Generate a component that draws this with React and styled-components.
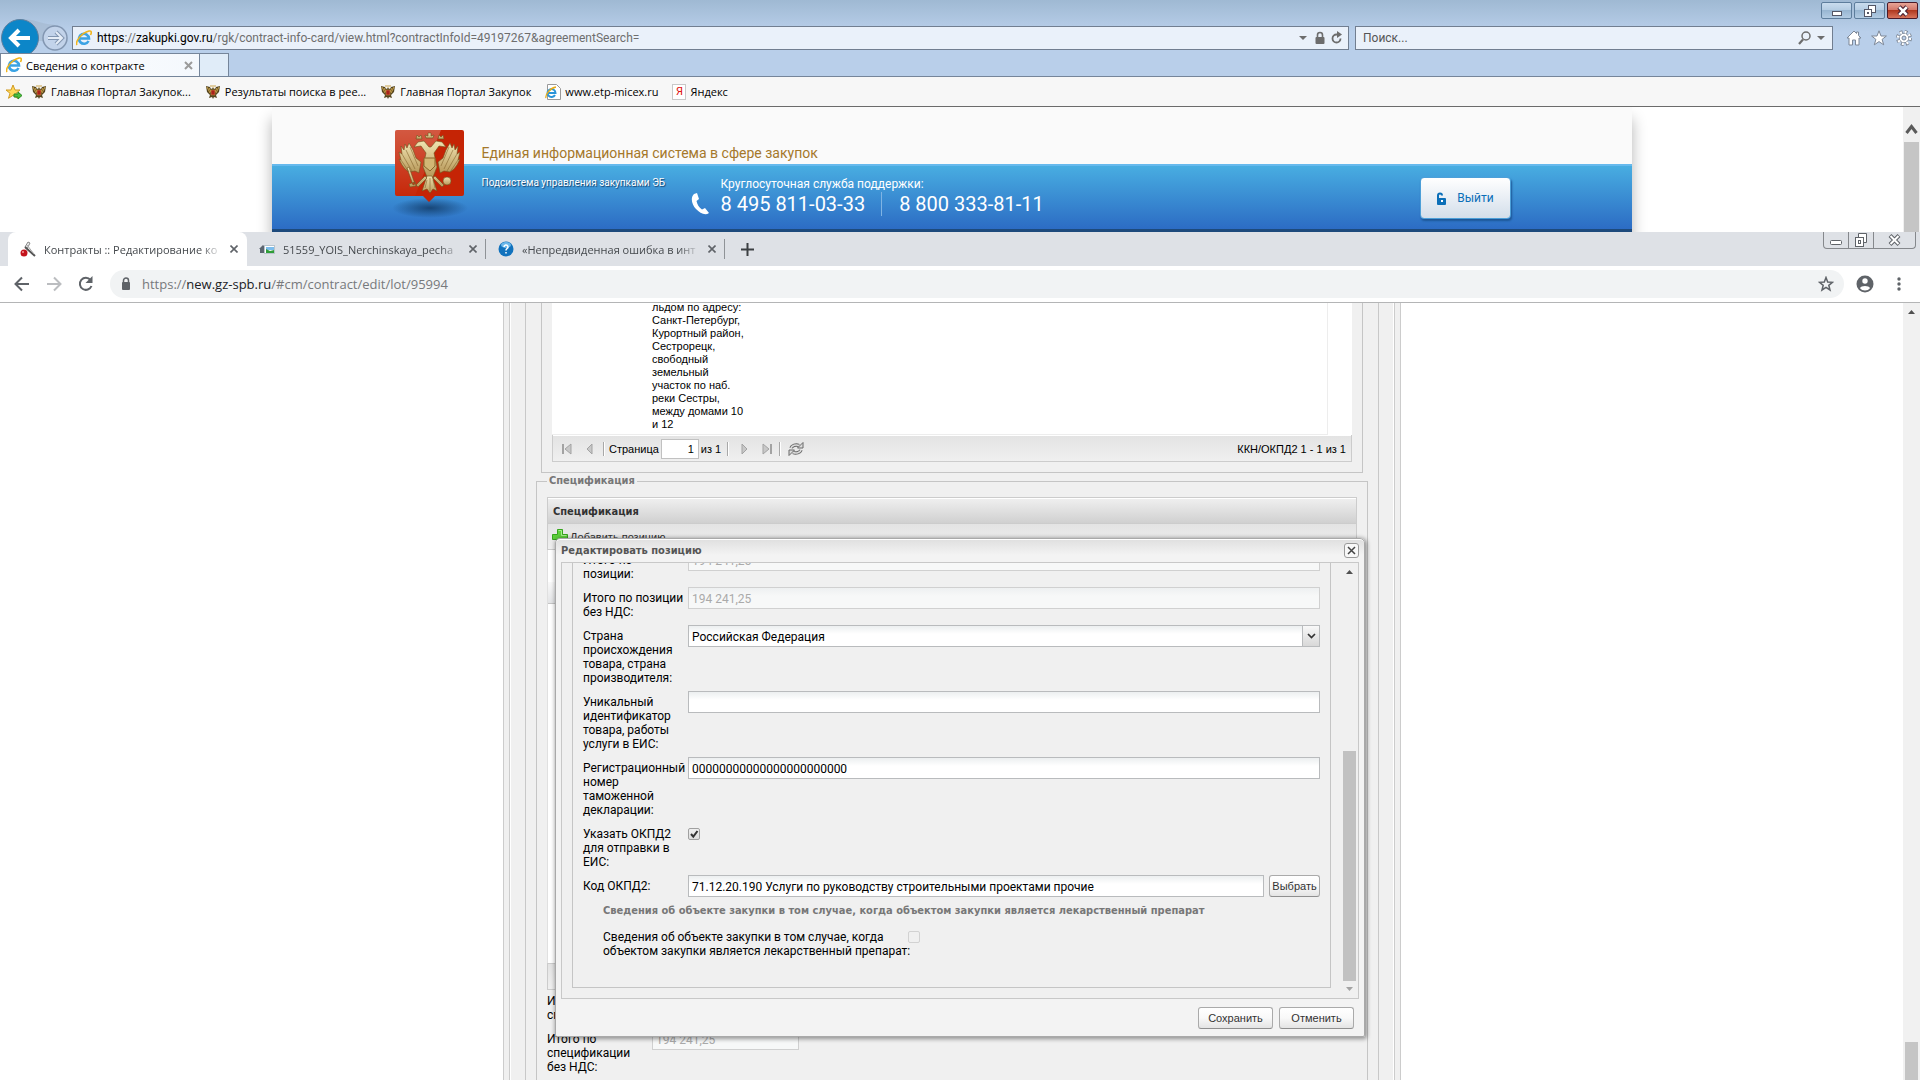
import React from 'react';
import styled, { createGlobalStyle } from 'styled-components';

const FAVORITES = [
  { icon: 'eagle', text: 'Главная Портал Закупок...' },
  { icon: 'eagle', text: 'Результаты поиска в рее...' },
  { icon: 'eagle', text: 'Главная Портал Закупок' },
  { icon: 'ie', text: 'www.etp-micex.ru' },
  { icon: 'yandex', text: 'Яндекс' },
];

const ADDRESS_LINES = [
  'льдом по адресу:',
  'Санкт-Петербург,',
  'Курортный район,',
  'Сестрорецк,',
  'свободный',
  'земельный',
  'участок по наб.',
  'реки Сестры,',
  'между домами 10',
  'и 12',
];

const lines = list => list.map((line, i) => (
  <React.Fragment key={line}>
    {i > 0 && <br />}
    {line}
  </React.Fragment>
));

function App() {
  return (
    <Desktop>
      <GlobalStyle />
      <ExplorerWindow />
      <ChromeWindow />
    </Desktop>
  );
}

export default App;

function ExplorerWindow() {
  return (
    <Explorer>
      <ExplorerTitle>
        <ExplorerControl aria-label="Свернуть">
          <svg width="12" height="12" viewBox="0 0 12 12">
            <rect x="1.5" y="6.5" width="9" height="4" fill="#fff" stroke="#535666" />
          </svg>
        </ExplorerControl>
        <ExplorerControl aria-label="Окно">
          <svg width="12" height="12" viewBox="0 0 12 12">
            <rect x="4.5" y=".5" width="7" height="7" fill="#fff" stroke="#535666" />
            <rect x=".5" y="4.5" width="7" height="7" fill="#fff" stroke="#535666" />
            <rect x="3" y="7" width="2" height="2" fill="#535666" />
          </svg>
        </ExplorerControl>
        <ExplorerControl $close aria-label="Закрыть">
          <svg width="12" height="12" viewBox="0 0 12 12">
            <path d="M2 2l8 8M10 2l-8 8" stroke="#4a2030" strokeWidth="4.6" />
            <path d="M2.2 2.2l7.6 7.6M9.8 2.2l-7.6 7.6" stroke="#fff" strokeWidth="2.6" />
          </svg>
        </ExplorerControl>
      </ExplorerTitle>
      <ExplorerNav>
        <NavArrows>
          <svg width="72" height="38" viewBox="0 0 72 38">
            <path d="M20 0C35 0 37 4 55 6l-6 16H30z" fill="#a5b9d0" opacity=".7" />
            <circle cx="20" cy="19" r="18.5" fill="#0c86c8" stroke="#5f7f9e" />
            <path d="M30 19H12M19 11l-8 8 8 8" fill="none" stroke="#fff" strokeWidth="4" />
            <circle cx="55" cy="19" r="12" fill="#c2d3ea" stroke="#8296b1" strokeWidth="1.5" />
            <path d="M48 19h13M56 13l6 6-6 6" fill="none" stroke="#8296b1" strokeWidth="4" />
            <path d="M48 19h13M56 13l6 6-6 6" fill="none" stroke="#e5edf7" strokeWidth="2" />
          </svg>
        </NavArrows>
        <ExplorerBox $grow>
          <IeIcon />
          <ExplorerUrl>
            <b>https</b>://<b>zakupki.gov.ru</b>/rgk/contract-info-card/view.html?contractInfoId=49197267&amp;agreementSearch=
          </ExplorerUrl>
          <Caret />
          <svg width="12" height="16" viewBox="0 0 12 16">
            <path d="M3.500 8V5a2.500 2.500 0 0 1 5 0V8" fill="none" stroke="#6d6d6d" strokeWidth="1.600" />
            <rect x="1.500" y="7" width="9" height="7" rx="1" fill="#6d6d6d" />
          </svg>
          <svg width="12" height="16" viewBox="0 0 12 16">
            <path d="M7 4.500H5.500A4 4 0 1 0 9.500 8.500" fill="none" stroke="#6d6d6d" strokeWidth="1.800" />
            <path d="M6 1v7l5-3.500z" fill="#6d6d6d" />
          </svg>
        </ExplorerBox>
        <ExplorerBox>
          <SearchInput placeholder="Поиск..." aria-label="Поиск" />
          <svg width="16" height="16" viewBox="0 0 16 16">
            <circle cx="10" cy="6" r="4" fill="none" stroke="#6d6d6d" strokeWidth="1.500" />
            <path d="M7 9.500L3 14" stroke="#6d6d6d" strokeWidth="2.200" />
          </svg>
          <Caret />
        </ExplorerBox>
        <NavTools>
          <svg width="16" height="16" viewBox="0 0 16 16">
            <path d="M8 1L1 8h2v7h3.500v-5h3v5H13V8h2l-2.500-2.500V2h-2v1.500z" fill="#fff" stroke="#7c8797" />
          </svg>
          <svg width="16" height="16" viewBox="0 0 16 16">
            <path d="M8 .8l2 5.200h5.400l-4.300 3.400 1.600 5.400L8 11.600l-4.700 3.200 1.600-5.400L.6 6H6z" fill="#fff" stroke="#7c8797" />
          </svg>
          <svg width="16" height="16" viewBox="0 0 16 16">
            <circle cx="8" cy="8" r="6" fill="none" stroke="#7c8797" strokeWidth="4" strokeDasharray="2.700 2" />
            <circle cx="8" cy="8" r="4.800" fill="#fff" stroke="#7c8797" />
            <circle cx="8" cy="8" r="6" fill="none" stroke="#fff" strokeWidth="2.400" strokeDasharray="1.900 2.800" />
            <circle cx="8" cy="8" r="2" fill="#bcd0ea" stroke="#7c8797" />
          </svg>
        </NavTools>
      </ExplorerNav>
      <ExplorerTabs>
        <ExplorerTab>
          <IeIcon />
          <span>Сведения о контракте</span>
          <svg width="9" height="9" viewBox="0 0 9 9">
            <path d="M1 1l7 7M8 1L1 8" stroke="#9b9b9b" strokeWidth="2" />
          </svg>
        </ExplorerTab>
        <ExplorerNewTab aria-label="Новая вкладка" />
      </ExplorerTabs>
      <Favorites>
        <svg width="18" height="16" viewBox="0 0 18 16">
          <path d="M8 1l2 5h5l-4 3.300 1.500 5L8 11.300l-4.500 3 1.500-5L1 6h5z" fill="#ffd95a" stroke="#d09a22" />
          <path d="M9 10h4V8l4 3.500-4 3.500v-2H9z" fill="#4cc03c" stroke="#2b8a22" />
        </svg>
        <FavoriteList>
          {FAVORITES.map((item, i) => (
            <Favorite key={i} href="#">
              {item.icon === 'eagle' && <EagleIcon />}
              {item.icon === 'ie' && <IePageIcon />}
              {item.icon === 'yandex' && <YandexIcon>Я</YandexIcon>}
              {item.text}
            </Favorite>
          ))}
        </FavoriteList>
      </Favorites>
      <ExplorerPage>
        <SiteColumn>
          <SiteHeader>
            <SiteTop />
            <SiteBand />
            <SiteContent>
              <Emblem />
              <SiteTitles>
                <SiteName>Единая информационная система в сфере закупок</SiteName>
                <SiteRow>
                  <Subsystem>Подсистема управления закупками ЭБ</Subsystem>
                  <Support>
                    <span>Круглосуточная служба поддержки:</span>
                    <Phones>
                      <svg width="18" height="22" viewBox="0 0 18 22">
                        <path d="M3 1C-1 5 1 12 5 16s9 7 13 4l-4-5-3 1.500C8 14.500 6 11 5.500 8L8 6 6 0z" fill="#fff" />
                      </svg>
                      <span>8 495 811-03-33</span>
                      <span>8 800 333-81-11</span>
                    </Phones>
                  </Support>
                </SiteRow>
              </SiteTitles>
              <LogoutButton>
                <svg width="11" height="13" viewBox="0 0 11 13">
                  <path d="M2 7V3.500a2 2 0 0 1 4 0" fill="none" stroke="#0b6fb8" strokeWidth="2" />
                  <rect x="1" y="6" width="9" height="7" rx="1" fill="#0b6fb8" />
                  <rect x="5" y="8" width="2" height="2" fill="#fff" />
                </svg>
                Выйти
              </LogoutButton>
            </SiteContent>
          </SiteHeader>
        </SiteColumn>
        <ExplorerScroll>
          <svg width="17" height="35" viewBox="0 0 17 35">
            <path d="M3.500 26l5-6.500 5 6.500" fill="none" stroke="#5a5a5a" strokeWidth="3" />
          </svg>
          <ScrollThumb />
        </ExplorerScroll>
      </ExplorerPage>
    </Explorer>
  );
}

function ChromeWindow() {
  return (
    <Chrome>
      <ChromeTabs>
        <ChromeTab $active>
          <svg width="16" height="16" viewBox="0 0 16 16">
            <path d="M5 6l3-5 2 1-3 6z" fill="#eee" stroke="#888" />
            <path d="M5 6l10 9" stroke="#555" strokeWidth="2" />
            <path d="M7 4l7 9" stroke="#aaa" />
            <circle cx="4" cy="12" r="3.500" fill="#c3141c" />
            <circle cx="3" cy="11" r="1" fill="#f39a9a" />
          </svg>
          <TabText>Контракты :: Редактирование ко</TabText>
          <TabClose />
        </ChromeTab>
        <ChromeTab $divider>
          <svg width="16" height="16" viewBox="0 0 16 16">
            <path d="M0 8l4-4 4 4H7v4H1V8z" fill="#5c6670" />
            <rect x="5.500" y="4.500" width="10" height="8" fill="#fff" stroke="#b9c4cc" />
            <rect x="7" y="6" width="8" height="3" fill="#7dbdec" />
            <path d="M7 12V8l4 2 4-1v3z" fill="#2f9d38" />
          </svg>
          <TabText>51559_YOIS_Nerchinskaya_pecha</TabText>
          <TabClose />
        </ChromeTab>
        <ChromeTab $divider>
          <svg width="16" height="16" viewBox="0 0 16 16">
            <circle cx="8" cy="8" r="7.500" fill="#1172bd" />
            <ellipse cx="8" cy="4" rx="5" ry="3" fill="#6cb8ea" />
            <path d="M6 6a2 2 0 1 1 3 1.700Q8 8.300 8 9.500M8 11v1.500" fill="none" stroke="#fff" strokeWidth="1.500" />
          </svg>
          <TabText>«Непредвиденная ошибка в инт</TabText>
          <TabClose />
        </ChromeTab>
        <NewTab aria-label="Новая вкладка">
          <svg width="13" height="13" viewBox="0 0 13 13">
            <path d="M6.500 0v13M0 6.500h13" stroke="#3c4043" strokeWidth="2" />
          </svg>
        </NewTab>
        <ChromeControls>
          <ChromeControl aria-label="Свернуть">
            <svg width="14" height="14" viewBox="0 0 14 14">
              <rect x="1.500" y="7.500" width="11" height="4" rx="1" fill="#fff" stroke="#5f6368" />
            </svg>
          </ChromeControl>
          <ChromeControl aria-label="Окно">
            <svg width="14" height="14" viewBox="0 0 14 14">
              <path d="M4.500 4V.5h8v9H9" fill="#fff" stroke="#5f6368" />
              <rect x="1.500" y="4.500" width="8" height="9" fill="#fff" stroke="#5f6368" />
              <rect x="4.500" y="7.500" width="2" height="3" fill="#fff" stroke="#5f6368" />
            </svg>
          </ChromeControl>
          <ChromeControl $wide aria-label="Закрыть">
            <svg width="13" height="12" viewBox="0 0 13 12">
              <path d="M2 1.500l9 9M11 1.500l-9 9" stroke="#5f6368" strokeWidth="4" />
              <path d="M2.500 2l8 8M10.500 2l-8 8" stroke="#fff" strokeWidth="2" />
            </svg>
          </ChromeControl>
        </ChromeControls>
      </ChromeTabs>
      <ChromeToolbar>
        <svg width="16" height="16" viewBox="0 0 16 16">
          <path d="M15 8H2M8 1.500L1.500 8 8 14.500" fill="none" stroke="#5f6368" strokeWidth="2" />
        </svg>
        <svg width="16" height="16" viewBox="0 0 16 16">
          <path d="M1 8h13M8 1.500L14.500 8 8 14.500" fill="none" stroke="#bbbdc0" strokeWidth="2" />
        </svg>
        <svg width="16" height="16" viewBox="0 0 16 16">
          <path d="M13.500 10A6 6 0 1 1 12.500 4" fill="none" stroke="#5f6368" strokeWidth="2" />
          <path d="M14.500 0v7h-7z" fill="#5f6368" />
        </svg>
        <Omnibox>
          <svg width="10" height="14" viewBox="0 0 10 14">
            <path d="M2.500 6V3.500a2.500 2.500 0 0 1 5 0V6" fill="none" stroke="#5f6368" strokeWidth="1.500" />
            <rect x="1" y="5" width="8" height="8" rx="1" fill="#5f6368" />
          </svg>
          <OmniboxUrl>
            https://<b>new.gz-spb.ru</b>/#cm/contract/edit/lot/95994
          </OmniboxUrl>
          <svg width="16" height="16" viewBox="0 0 16 16">
            <path d="M8 1.500l1.700 4.500 4.800.3-3.700 3 1.200 4.700L8 11.400 4 14l1.200-4.700-3.700-3 4.800-.3z" fill="none" stroke="#5f6368" strokeWidth="1.500" />
          </svg>
        </Omnibox>
        <svg width="18" height="18" viewBox="0 0 18 18">
          <circle cx="9" cy="9" r="8.500" fill="#5f6368" />
          <circle cx="9" cy="6" r="2.700" fill="#fff" />
          <path d="M3.800 13a5.500 3 0 0 1 10.400 0 6.500 6.500 0 0 1-10.400 0z" fill="#fff" />
        </svg>
        <svg width="18" height="18" viewBox="0 0 18 18">
          <circle cx="9" cy="4" r="1.700" fill="#5f6368" />
          <circle cx="9" cy="9" r="1.700" fill="#5f6368" />
          <circle cx="9" cy="14" r="1.700" fill="#5f6368" />
        </svg>
      </ChromeToolbar>
      <ChromePage>
        <PageArea>
          <ContractPage />
        </PageArea>
        <PageScroll>
          <svg width="17" height="17" viewBox="0 0 17 17">
            <path d="M5 11h7L8.500 7z" fill="#505050" />
          </svg>
          <ScrollThumb $bottom />
        </PageScroll>
        <Overlay>
          <EditDialog />
        </Overlay>
      </ChromePage>
    </Chrome>
  );
}

function ContractPage() {
  return (
    <OuterFrame>
      <MiddleFrame>
        <InnerFrame>
          <CodesBox>
            <GridView>
              <GridTable>
                <tbody>
                  <tr>
                    <GridCell $width="98px" />
                    <GridCell $width="110px">{lines(ADDRESS_LINES)}</GridCell>
                    <GridCell />
                  </tr>
                </tbody>
              </GridTable>
            </GridView>
            <Paging />
          </CodesBox>
          <SpecBox>
            <Legend>Спецификация</Legend>
            <PanelHeader>Спецификация</PanelHeader>
            <PanelToolbar>
              <AddButton>
                <svg width="16" height="16" viewBox="0 0 16 16">
                  <path d="M5.500.5h5v5h5v5h-5v5h-5v-5h-5v-5h5z" fill="#5ed03c" stroke="#37a51d" />
                  <path d="M6.500 1.500h3v5h5" fill="none" stroke="#a8ee90" />
                </svg>
                Добавить позицию
              </AddButton>
            </PanelToolbar>
            <SpecGrid>
              <SpecGridHeader />
            </SpecGrid>
            <PanelFooter />
            <Row>
              <Label as="span" $width="105px">{lines(['Итого по', 'спецификации:'])}</Label>
            </Row>
            <Row>
              <Label htmlFor="spec-total" $width="105px">{lines(['Итого по', 'спецификации', 'без НДС:'])}</Label>
              <TextField id="spec-total" $width="147px" disabled defaultValue="194 241,25" />
            </Row>
          </SpecBox>
        </InnerFrame>
      </MiddleFrame>
    </OuterFrame>
  );
}

function Paging() {
  return (
    <PagingBar>
      <PageButton disabled aria-label="Первая страница">
        <PageArrow d="M11 3v10L5 8z" bar="M3 3v10" />
      </PageButton>
      <PageButton disabled aria-label="Предыдущая страница">
        <PageArrow d="M10 3v10L5 8z" />
      </PageButton>
      <PagingSeparator />
      <PagingText htmlFor="page">Страница</PagingText>
      <PageInput id="page" defaultValue="1" />
      <span>из 1</span>
      <PagingSeparator />
      <PageButton disabled aria-label="Следующая страница">
        <PageArrow d="M6 3v10l5-5z" />
      </PageButton>
      <PageButton disabled aria-label="Последняя страница">
        <PageArrow d="M5 3v10l6-5z" bar="M13 3v10" />
      </PageButton>
      <PagingSeparator />
      <PageButton aria-label="Обновить">
        <svg width="16" height="16" viewBox="0 0 16 16">
          <path d="M3 7a5.500 4 0 0 1 8-2.500M13 9a5.500 4 0 0 1-8 2.500" fill="none" stroke="#686868" strokeWidth="3.500" />
          <path d="M3 7a5.500 4 0 0 1 8-2.500M13 9a5.500 4 0 0 1-8 2.500" fill="none" stroke="#ddd" strokeWidth="1.500" />
          <path d="M9.500 7H15V1.500zM6.500 9H1v5.500z" fill="#ddd" stroke="#686868" />
        </svg>
      </PageButton>
      <PagingInfo>ККН/ОКПД2 1 - 1 из 1</PagingInfo>
    </PagingBar>
  );
}

function PageArrow({ d, bar }) {
  return (
    <svg width="16" height="16" viewBox="0 0 16 16">
      <path d={d} fill="#c8c8c8" stroke="#a3a3a3" />
      {bar && <path d={bar} stroke="#a3a3a3" strokeWidth="2" />}
    </svg>
  );
}

function EditDialog() {
  return (
    <Dialog role="dialog" aria-labelledby="dialog-title">
      <DialogHeader>
        <DialogTitle id="dialog-title">Редактировать позицию</DialogTitle>
        <DialogClose aria-label="Закрыть">
          <svg width="15" height="15" viewBox="0 0 15 15">
            <rect x=".5" y=".5" width="14" height="14" rx="2.500" fill="#f8f8f8" stroke="#9a9a9a" />
            <path d="M4 4l7 7M11 4l-7 7" stroke="#444" strokeWidth="1.500" />
          </svg>
        </DialogClose>
      </DialogHeader>
      <DialogBody>
        <DialogScroller>
          <FormBox>
            <Row>
              <Label htmlFor="total">{lines(['Итого по', 'позиции:'])}</Label>
              <TextField id="total" disabled defaultValue="194 241,25" />
            </Row>
            <Row>
              <Label htmlFor="total-no-vat">{lines(['Итого по позиции', 'без НДС:'])}</Label>
              <TextField id="total-no-vat" disabled defaultValue="194 241,25" />
            </Row>
            <Row>
              <Label htmlFor="country">
                {lines(['Страна', 'происхождения', 'товара, страна', 'производителя:'])}
              </Label>
              <SelectWrap>
                <Select id="country">
                  <option>Российская Федерация</option>
                </Select>
                <SelectTrigger>
                  <svg width="9" height="6" viewBox="0 0 9 6">
                    <path d="M1 1l3.500 3.500L8 1" fill="none" stroke="#333" strokeWidth="1.700" />
                  </svg>
                </SelectTrigger>
              </SelectWrap>
            </Row>
            <Row>
              <Label htmlFor="uid">
                {lines(['Уникальный', 'идентификатор', 'товара, работы', 'услуги в ЕИС:'])}
              </Label>
              <TextField id="uid" />
            </Row>
            <Row>
              <Label htmlFor="reg-number">
                {lines(['Регистрационный', 'номер', 'таможенной', 'декларации:'])}
              </Label>
              <TextField id="reg-number" defaultValue="00000000000000000000000" />
            </Row>
            <Row>
              <Label htmlFor="okpd-on">{lines(['Указать ОКПД2', 'для отправки в', 'ЕИС:'])}</Label>
              <Checkbox id="okpd-on" defaultChecked />
            </Row>
            <Row>
              <Label htmlFor="okpd">Код ОКПД2:</Label>
              <TextField id="okpd" defaultValue="71.12.20.190 Услуги по руководству строительными проектами прочие" />
              <ExtButton $small>Выбрать</ExtButton>
            </Row>
            <DrugBox>
              <DrugLegend>
                Сведения об объекте закупки в том случае, когда объектом закупки является лекарственный препарат
              </DrugLegend>
              <Row>
                <Label htmlFor="drug" $width="305px">
                  {lines(['Сведения об объекте закупки в том случае, когда', 'объектом закупки является лекарственный препарат:'])}
                </Label>
                <Checkbox id="drug" disabled />
              </Row>
            </DrugBox>
          </FormBox>
        </DialogScroller>
        <DialogScroll>
          <svg width="13" height="17" viewBox="0 0 13 17">
            <path d="M3 11h7L6.500 7z" fill="#505050" />
          </svg>
          <DialogThumb />
          <svg width="13" height="17" viewBox="0 0 13 17">
            <path d="M3 6h7l-3.500 4z" fill="#a3a3a3" />
          </svg>
        </DialogScroll>
      </DialogBody>
      <DialogFooter>
        <ExtButton>Сохранить</ExtButton>
        <ExtButton>Отменить</ExtButton>
      </DialogFooter>
    </Dialog>
  );
}

function Checkbox(props) {
  return (
    <CheckWrap>
      <CheckInput type="checkbox" {...props} />
      {props.defaultChecked && (
        <CheckMark width="12" height="12" viewBox="0 0 12 12">
          <path d="M3 6l2.300 2.700L9.500 3" fill="none" stroke="#333" strokeWidth="2" />
        </CheckMark>
      )}
    </CheckWrap>
  );
}

function IeIcon() {
  return (
    <svg width="16" height="16" viewBox="0 0 16 16">
      <path d="M3.500 8.500H13A5 5 0 1 0 12.500 11" fill="none" stroke="#3ba3e4" strokeWidth="2.600" />
      <path d="M1 15C-1 12 5 3 13 1c3-.5 2.500 2 1.500 4" fill="none" stroke="#f0b41c" strokeWidth="1.600" />
    </svg>
  );
}

function IePageIcon() {
  return (
    <svg width="16" height="16" viewBox="0 0 16 16">
      <path d="M2.500.5h9l4 4v11h-13z" fill="#fff" stroke="#999" />
      <path d="M3 9h7.500a4 4 0 1 0-.5 2" fill="none" stroke="#2a94d8" strokeWidth="2" />
      <path d="M1 14C0 11 5 4 11 3" fill="none" stroke="#e9ac17" strokeWidth="1.300" />
    </svg>
  );
}

function EagleIcon() {
  return (
    <svg width="16" height="16" viewBox="0 0 16 16">
      <path d="M8 4L6 5 5 3 1 2l1 6 3 3-1 3 3-1 1 2 1-2 3 1-1-3 3-3 1-6-4 1-1 2z" fill="#55451f" />
      <path d="M2 3l3 6M4 4l2 4M14 3l-3 6M12 4l-2 4M8 1v3M5 2h2M9 2h2" stroke="#c9a24a" />
      <rect x="6" y="6" width="4" height="5" fill="#a8221c" stroke="#d8a04a" strokeWidth=".5" />
    </svg>
  );
}

function Emblem() {
  const wing = 'M31 32l-5-4-3-8-4-7-2 5-2-4-1 6-3-4 1 8-3-2 2 8-2-1 3 6 3 4 4 3 6-1 4 2z';
  return (
    <EmblemSvg width="80" height="90" viewBox="0 0 80 90">
      <defs>
        <radialGradient id="shade">
          <stop offset="0" stopColor="#14406f" stopOpacity=".9" />
          <stop offset="1" stopColor="#14406f" stopOpacity="0" />
        </radialGradient>
        <linearGradient id="gold" x1="0" y1="0" x2="0" y2="1">
          <stop offset="0" stopColor="#efe2b0" />
          <stop offset="1" stopColor="#b8995a" />
        </linearGradient>
        <linearGradient id="shine" x1="0" y1="0" x2="0" y2="1">
          <stop offset="0" stopColor="#fff" stopOpacity=".6" />
          <stop offset="1" stopColor="#fff" stopOpacity=".05" />
        </linearGradient>
      </defs>
      <ellipse cx="40" cy="78" rx="38" ry="10" fill="url(#shade)" />
      <path d="M7 0h65q2 0 2 2v62q0 2-2 2H45l-6 6-6-6H7q-2 0-2-2V2q0-2 2-2z" fill="#c52405" />
      <path d="M7 0h44L25 66H7q-2 0-2-2V2q0-2 2-2z" fill="url(#shine)" opacity=".4" />
      <g fill="url(#gold)" stroke="#71501d" strokeWidth=".6">
        <path d={wing} />
        <path d={wing} transform="translate(79 0) scale(-1 1)" />
        <path d="M36 23l-5-7-7 1 4-5 6-1 5 6h2l5-6 6 1 4 5-7-1-5 7 3 14-4 10h-6l-4-10z" />
        <path d="M37 46h5l5 15-4-2-3 4-3-4-5 2z" />
        <path d="M36 8l-1-3 3 1V3h3v3l3-1-1 3zM26 9l1-4 2 2 2-2 1 4zM48 9l1-4 2 2 2-2 1 4z" />
        <circle cx="57" cy="51" r="4" />
        <path d="M17 38l6 17 2-1-6-17zM26 55l9-9 2 2-9 9zM54 55l-9-9-2 2 9 9zM19 54l6-2 1 4-6 1z" />
      </g>
      <path d="M34 28h11v8l-5 5-6-5z" fill="#d2b775" stroke="#8a672a" />
      <g stroke="#80602a" strokeWidth=".8" opacity=".7">
        <path d="M16 20l9 19M20 17l8 19M12 24l10 17M11 30l8 12M63 20l-9 19M59 17l-8 19M67 24L57 41M68 30l-8 12M40 48v13M37 50l-2 8M43 50l2 8" />
      </g>
    </EmblemSvg>
  );
}

function TabClose() {
  return (
    <TabCloseButton aria-label="Закрыть вкладку">
      <svg width="8" height="8" viewBox="0 0 8 8">
        <path d="M.5.5l7 7M7.500.5l-7 7" stroke="#5f6368" strokeWidth="1.600" />
      </svg>
    </TabCloseButton>
  );
}

const GlobalStyle = createGlobalStyle`
  * {
    box-sizing: border-box;
  }

  body {
    margin: 0;
    font-family: 'Roboto', 'Noto Sans', sans-serif;
    font-size: 12px;
    color: #000;
    overflow: hidden;
  }

  button {
    margin: 0;
    padding: 0;
    border: none;
    background: none;
    font: inherit;
    color: inherit;
  }

  svg {
    display: block;
    flex: none;
  }
`;

const Desktop = styled.div`
  display: flex;
  flex-direction: column;
  height: 100vh;
`;

const Explorer = styled.div`
  flex: none;
  height: 232px;
  display: flex;
  flex-direction: column;
  background: linear-gradient(#9fb9d3, #b9cfea 32px);
`;

const ExplorerTitle = styled.div`
  display: flex;
  justify-content: flex-end;
  gap: 2px;
  height: 18px;
  padding: 2px 2px 0 0;
`;

const ExplorerControl = styled.button`
  display: flex;
  align-items: center;
  justify-content: center;
  width: 31px;
  height: 17px;
  border: 1px solid ${props => (props.$close ? '#4b1a28' : '#5d7d9c')};
  border-radius: 2px;
  background: ${props => (props.$close
    ? 'linear-gradient(#e8a496, #d4786a 45%, #b03920 50%, #d8745c)'
    : 'linear-gradient(#c9dcee, #b5cde3 45%, #98b6d2 50%, #b2cbe3)')};
`;

const ExplorerNav = styled.div`
  display: flex;
  align-items: center;
  height: 35px;
  gap: 6px;
  padding-top: 5px;
`;

const NavArrows = styled.div`
  width: 66px;
`;

const ExplorerBox = styled.div`
  display: flex;
  align-items: center;
  gap: 5px;
  height: 24px;
  padding: 0 5px 0 3px;
  border: 1px solid #717e90;
  background: #eaf1fa;
  ${props => (props.$grow ? 'flex: 1; min-width: 0;' : 'flex: 0 1 478px;')}
`;

const ExplorerUrl = styled.span`
  flex: 1;
  color: #6e6e6e;
  white-space: nowrap;

  b {
    font-weight: 400;
    color: #000;
  }
`;

const Caret = styled.span`
  margin-right: 2px;
  border: 4px solid transparent;
  border-top-color: #6d6d6d;
  border-bottom-width: 0;
`;

const SearchInput = styled.input`
  flex: 1;
  min-width: 0;
  padding: 0 4px;
  border: none;
  background: none;
  font: 12px 'Roboto', sans-serif;

  &::placeholder {
    color: #555;
    opacity: 1;
  }
`;

const NavTools = styled.div`
  display: flex;
  gap: 9px;
  padding: 0 8px 0 7px;
`;

const ExplorerTabs = styled.div`
  display: flex;
  height: 24px;
  border-bottom: 1px solid #75859a;
  font-family: 'Open Sans', sans-serif;
  font-size: 11px;
`;

const ExplorerTab = styled.div`
  display: flex;
  align-items: center;
  gap: 4px;
  width: 200px;
  padding: 0 6px 0 5px;
  border: 1px solid #75859a;
  border-bottom: none;
  background: linear-gradient(90deg, #fff, #f4f8fd);

  span {
    flex: 1;
  }
`;

const ExplorerNewTab = styled.button`
  width: 29px;
  border: 1px solid #75859a;
  border-width: 1px 1px 0 0;
  background: #e0ecf8;
`;

const Favorites = styled.div`
  display: flex;
  align-items: center;
  gap: 8px;
  height: 30px;
  padding-left: 5px;
  border-bottom: 1px solid #6b6b6b;
  background: #f7f7f7;
  font-family: 'Open Sans', sans-serif;
  font-size: 11px;
`;

const FavoriteList = styled.div`
  display: flex;
  gap: 14px;
`;

const Favorite = styled.a`
  display: flex;
  align-items: center;
  gap: 4px;
  color: #000;
  text-decoration: none;
`;

const YandexIcon = styled.span`
  width: 14px;
  border: 1px solid #c8c8c8;
  background: #fff;
  color: #e01010;
  font: 11px/14px 'Roboto', sans-serif;
  text-align: center;
`;

const ExplorerPage = styled.div`
  flex: 1;
  display: flex;
  background: #fff;
  overflow: hidden;
`;

const SiteColumn = styled.div`
  flex: 1;
  display: flex;
  justify-content: center;
`;

const SiteHeader = styled.div`
  display: grid;
  grid-template-rows: 57px 1fr;
  width: 100%;
  max-width: 1360px;
  box-shadow: 0 12px 14px rgba(0, 0, 0, 0.3);
`;

const SiteTop = styled.div`
  grid-area: 1 / 1;
  background: #fafafa;
`;

const SiteBand = styled.div`
  grid-area: 2 / 1;
  border-top: 2px solid #66b9ed;
  border-bottom: 3px solid #1d4a7c;
  background: linear-gradient(#48ade1, #2c6cc4);
`;

const SiteContent = styled.div`
  grid-area: 1 / 1 / 3 / 2;
  display: flex;
  padding: 23px 121px 0 118px;
`;

const EmblemSvg = styled.svg`
  margin-right: 12px;
`;

const SiteTitles = styled.div`
  flex: 1;
  padding-top: 13px;
`;

const SiteName = styled.div`
  color: #a5782b;
  font-size: 14px;
  line-height: 20px;
`;

const SiteRow = styled.div`
  display: flex;
  padding-top: 13px;
  color: #fff;
`;

const Subsystem = styled.div`
  width: 209px;
  font-size: 10px;
  line-height: 14px;
  text-shadow: 1px 1px 1px #16436f;
`;

const Support = styled.div`
  line-height: 16px;

  > span {
    margin-left: 30px;
  }
`;

const Phones = styled.div`
  display: flex;
  align-items: center;
  gap: 12px;
  font-size: 20px;
  line-height: 24px;

  span + span {
    padding-left: 17px;
    margin-left: 4px;
    border-left: 1px solid #7fb4e4;
  }
`;

const LogoutButton = styled.button`
  display: flex;
  align-items: center;
  justify-content: center;
  gap: 10px;
  width: 91px;
  height: 42px;
  margin-top: 47px;
  border: 1px solid #4c9fd8;
  border-radius: 4px;
  background: linear-gradient(#fff, #d3deea);
  box-shadow: 1px 2px 2px #1d5797;
  color: #0b6fb8;
`;

const ExplorerScroll = styled.div`
  display: flex;
  flex-direction: column;
  width: 17px;
  background: #f0f0f0;
`;

const ScrollThumb = styled.div`
  flex: ${props => (props.$bottom ? 'none' : 1)};
  height: 38px;
  margin: ${props => (props.$bottom ? 'auto 2px 0' : '0 1px')};
  background: #c5c5c5;
`;

const Chrome = styled.div`
  flex: 1;
  min-height: 0;
  display: flex;
  flex-direction: column;
  background: #fff;
`;

const ChromeTabs = styled.div`
  display: flex;
  height: 34px;
  padding: 0 4px 0 8px;
  background: #dee1e6;
  font-family: 'Open Sans', sans-serif;
  font-size: 11px;
  color: #45494d;
`;

const ChromeTab = styled.div`
  display: flex;
  align-items: center;
  gap: 8px;
  width: 239px;
  padding: 0 12px;
  border-radius: 8px 8px 0 0;
  background: ${props => (props.$active ? '#fff' : 'none')};

  &::after {
    content: '';
    width: 1px;
    height: 20px;
    margin-right: -12px;
    background: ${props => (props.$divider ? '#8f9397' : 'none')};
  }
`;

const TabText = styled.span`
  flex: 1;
  overflow: hidden;
  white-space: nowrap;
  mask-image: linear-gradient(90deg, #000 88%, transparent);
`;

const TabCloseButton = styled.button`
  display: flex;
  padding: 4px;
  margin: 0 -4px;
`;

const NewTab = styled.button`
  width: 30px;
  padding-left: 16px;
  align-self: center;
`;

const ChromeControls = styled.div`
  display: flex;
  height: 17px;
  margin-left: auto;
  border: 1px solid #85888c;
  border-top: none;
  border-radius: 0 0 4px 4px;
`;

const ChromeControl = styled.button`
  display: flex;
  align-items: center;
  justify-content: center;
  width: ${props => (props.$wide ? '41px' : '25px')};
  border-right: ${props => (props.$wide ? 'none' : '1px solid #85888c')};
`;

const ChromeToolbar = styled.div`
  display: flex;
  align-items: center;
  gap: 16px;
  height: 37px;
  padding: 0 12px 0 14px;
  border-bottom: 1px solid #b4b5b6;
`;

const Omnibox = styled.div`
  flex: 1;
  display: flex;
  align-items: center;
  gap: 11px;
  height: 28px;
  margin: 0 -4px 0 0;
  padding: 0 10px 0 11px;
  border-radius: 14px;
  background: #f1f3f4;
`;

const OmniboxUrl = styled.span`
  flex: 1;
  color: #77797c;
  font-family: 'Open Sans', sans-serif;
  font-size: 13px;

  b {
    font-weight: 400;
    color: #202124;
  }
`;

const ChromePage = styled.div`
  position: relative;
  flex: 1;
  min-height: 0;
  display: flex;
  overflow: hidden;
`;

const PageArea = styled.div`
  flex: 1;
  display: flex;
  justify-content: center;
  padding-left: 1px;
  overflow: hidden;
`;

const PageScroll = styled.div`
  display: flex;
  flex-direction: column;
  width: 17px;
  background: #f1f1f1;
`;

const OuterFrame = styled.div`
  width: 100%;
  max-width: 898px;
  padding: 0 5px;
  border: 1px solid #ccc;
  border-width: 0 1px;
  background: #f0f0f0;
`;

const MiddleFrame = styled.div`
  padding: 0 15px;
  border: 1px solid #ccc;
  border-width: 0 1px;
  box-shadow: inset 1px 0 #fff, inset -1px 0 #fff;
`;

const InnerFrame = styled.div`
  min-height: 100vh;
  padding: 0 10px;
  border: 1px solid #c8c8c8;
  border-width: 0 1px;
`;

const CodesBox = styled.div`
  margin: 0 5px;
  padding: 0 10px 10px;
  border: 1px solid #c5c5c5;
  border-top: none;
`;

const GridView = styled.div`
  display: flex;
  flex-direction: column;
  justify-content: flex-end;
  height: 132px;
  padding-right: 24px;
  background: #fff;
  overflow: hidden;
`;

const GridTable = styled.table`
  width: 100%;
  border-collapse: collapse;
  border: 1px solid #ededed;
  border-width: 0 1px 1px 0;
  font: 11px/13px 'Liberation Sans', sans-serif;
`;

const GridCell = styled.td`
  width: ${props => props.$width || 'auto'};
  padding: 0 2px 3px;
  white-space: nowrap;
`;

const PagingBar = styled.div`
  display: flex;
  align-items: center;
  height: 27px;
  padding: 1px 5px 0 4px;
  border: 1px solid #ccc;
  border-top: none;
  background: linear-gradient(#e3e3e3, #f0f0f0);
  box-shadow: inset 0 1px #fff;
  font: 11px 'Liberation Sans', sans-serif;
`;

const PageButton = styled.button`
  padding: 0 3px;
  height: 16px;
`;

const PagingSeparator = styled.span`
  width: 2px;
  height: 14px;
  margin: 0 4px 0 2px;
  border-left: 1px solid #a8a8a8;
  border-right: 1px solid #fff;
`;

const PagingText = styled.label`
  margin-right: 2px;
`;

const PageInput = styled.input`
  width: 38px;
  height: 20px;
  margin-right: 2px;
  padding: 0 4px;
  border: 1px solid #c1c1c1;
  font: 11px 'Liberation Sans', sans-serif;
  text-align: right;

  & + span {
    margin-right: 4px;
  }
`;

const PagingInfo = styled.span`
  margin-left: auto;
`;

const SpecBox = styled.fieldset`
  min-width: 0;
  margin: 1px 0 0;
  padding: 9px 10px 0;
  border: 1px solid #c5c5c5;
`;

const Legend = styled.legend`
  padding: 0 2px;
  color: #777;
  font: bold 11px/14px 'DejaVu Sans Condensed', 'DejaVu Sans', sans-serif;
`;

const PanelHeader = styled.div`
  height: 27px;
  padding-left: 5px;
  border: 1px solid #ccc;
  background: linear-gradient(#f0f0f0, #d0d0d0);
  box-shadow: inset 0 1px #fff;
  color: #333;
  font: bold 11px/27px 'DejaVu Sans Condensed', 'DejaVu Sans', sans-serif;
`;

const PanelToolbar = styled.div`
  height: 26px;
  padding: 5px 4px 0;
  border: 1px solid #ccc;
  border-width: 0 1px 1px;
  background: linear-gradient(#e3e3e3, #f0f0f0);
`;

const AddButton = styled.button`
  display: flex;
  align-items: center;
  gap: 2px;
  color: #333;
  font: 11px/16px 'Liberation Sans', sans-serif;
`;

const SpecGrid = styled.div`
  height: 413px;
  padding-top: 32px;
  border-left: 1px solid #e0e0e0;
  background: #fff;
`;

const SpecGridHeader = styled.div`
  height: 22px;
  border-bottom: 1px solid #c5c5c5;
  background: linear-gradient(#f9f9f9, #e3e4e6);
`;

const PanelFooter = styled.div`
  height: 27px;
  border: 1px solid #ccc;
  background: linear-gradient(#e3e3e3, #f0f0f0);
`;

const Row = styled.div`
  display: flex;
  margin-bottom: 6px;
`;

const Label = styled.label`
  flex: none;
  width: ${props => props.$width || '105px'};
  padding-top: 4px;
  line-height: 14px;
  white-space: nowrap;
`;

const TextField = styled.input`
  ${props => (props.$width ? `width: ${props.$width};` : 'flex: 1; min-width: 0;')}
  height: 22px;
  padding: 1px 3px 0;
  border: 1px solid ${props => (props.disabled ? '#d0d0d0' : '#b9bbbd')};
  background: ${props => (props.disabled
    ? 'linear-gradient(#eef0f1, #f7f8f8 8px)'
    : 'linear-gradient(#eceff0, #fff 8px)')};
  color: ${props => (props.disabled ? '#aaa' : '#000')};
  font: 12px 'Roboto', sans-serif;
`;

const SelectWrap = styled.div`
  position: relative;
  flex: 1;
  height: 22px;
`;

const Select = styled.select`
  width: 100%;
  height: 22px;
  padding: 1px 3px 0;
  border: 1px solid #b9bbbd;
  border-radius: 0;
  background: linear-gradient(#eceff0, #fff 8px);
  color: #000;
  font: 12px 'Roboto', sans-serif;
  appearance: none;
`;

const SelectTrigger = styled.span`
  position: absolute;
  top: 0;
  right: 0;
  display: flex;
  align-items: center;
  justify-content: center;
  width: 18px;
  height: 22px;
  border: 1px solid #b9bbbd;
  background: linear-gradient(#f8f8f8, #d8d8d8);
  pointer-events: none;
`;

const CheckWrap = styled.span`
  position: relative;
  width: 12px;
  height: 12px;
  margin-top: 5px;
`;

const CheckInput = styled.input`
  display: block;
  width: 12px;
  height: 12px;
  margin: 0;
  border: 1px solid ${props => (props.disabled ? '#d2d2d2' : '#a0a0a0')};
  border-radius: 2px;
  background: ${props => (props.disabled ? '#f0f0f0' : 'linear-gradient(#efefef, #dedede)')};
  appearance: none;
`;

const CheckMark = styled.svg`
  position: absolute;
  top: 0;
  left: 0;
  pointer-events: none;
`;

const ExtButton = styled.button`
  width: ${props => (props.$small ? '51px' : '75px')};
  height: 22px;
  margin-left: ${props => (props.$small ? '5px' : '0')};
  border: 1px solid #aaa;
  border-bottom-color: #8f8f8f;
  border-radius: 3px;
  background: linear-gradient(#fff, #f9f9f9 48%, #e4e4e4);
  color: #333;
  font: 11px 'Liberation Sans', sans-serif;
`;

const Overlay = styled.div`
  position: absolute;
  inset: 0;
  display: flex;
  justify-content: center;
  align-items: flex-start;
  padding-top: 235px;
`;

const Dialog = styled.div`
  width: 810px;
  padding: 0 5px;
  border: 1px solid #a9a9a9;
  border-radius: 5px 5px 2px 2px;
  background: linear-gradient(#dfdfdf, #f3f3f3 16px);
  box-shadow: 1px 1px 4px 1px rgba(0, 0, 0, 0.4), inset 0 1px #fff;
`;

const DialogHeader = styled.div`
  display: flex;
  align-items: center;
  justify-content: space-between;
  height: 23px;
`;

const DialogTitle = styled.span`
  color: #555;
  font: bold 11px 'DejaVu Sans Condensed', 'DejaVu Sans', sans-serif;
`;

const DialogClose = styled.button`
  display: flex;
`;

const DialogBody = styled.div`
  display: flex;
  height: 437px;
  border: 1px solid #c8c8c8;
  background: #f0f0f0;
  overflow: hidden;
`;

const DialogScroller = styled.div`
  flex: 1;
  display: flex;
  flex-direction: column;
  justify-content: flex-end;
  padding: 0 10px;
  overflow: hidden;
`;

const FormBox = styled.div`
  padding: 0 10px 23px;
  border: 1px solid #c5c5c5;
  border-top: none;
  margin-bottom: 10px;
`;

const DrugBox = styled.fieldset`
  min-width: 0;
  margin: 7px 0 0 18px;
  padding: 8px 2px 0;
  border: none;
`;

const DrugLegend = styled.legend`
  padding: 0;
  color: #777;
  font: bold 11px/14px 'DejaVu Sans Condensed', 'DejaVu Sans', sans-serif;
`;

const DialogScroll = styled.div`
  display: flex;
  flex-direction: column;
  width: 17px;
  padding: 0 2px;
`;

const DialogThumb = styled.div`
  height: 230px;
  margin-top: auto;
  background: #c1c1c1;
`;

const DialogFooter = styled.div`
  display: flex;
  justify-content: flex-end;
  gap: 6px;
  padding: 8px 5px 7px;
`;
